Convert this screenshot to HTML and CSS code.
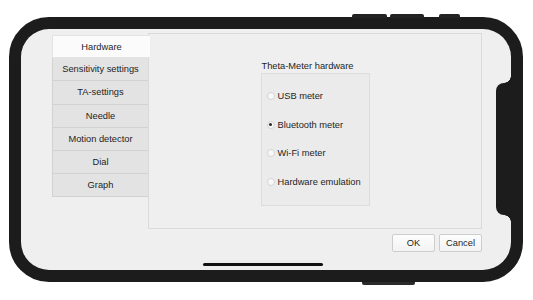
FILE: index.html
```html
<!DOCTYPE html>
<html>
<head>
<meta charset="utf-8">
<link rel="stylesheet" href="styles.css">
</head>
<body>
<div class="phone">
  <div class="btn-top b1"></div>
  <div class="btn-top b2"></div>
  <div class="btn-top b3"></div>
  <div class="btn-bottom"></div>
  <div class="screen">
    <div class="dialog">
      <div class="tabs">
        <div class="tab active">Hardware</div>
        <div class="tab">Sensitivity settings</div>
        <div class="tab">TA-settings</div>
        <div class="tab">Needle</div>
        <div class="tab">Motion detector</div>
        <div class="tab">Dial</div>
        <div class="tab">Graph</div>
      </div>
      <div class="panel">
        <div class="group">
          <div class="group-title">Theta-Meter hardware</div>
          <div class="group-box">
            <div class="radio-row"><span class="radio"></span><span>USB meter</span></div>
            <div class="radio-row"><span class="radio checked"></span><span>Bluetooth meter</span></div>
            <div class="radio-row"><span class="radio"></span><span>Wi-Fi meter</span></div>
            <div class="radio-row"><span class="radio"></span><span>Hardware emulation</span></div>
          </div>
        </div>
      </div>
    </div>
    <div class="actions">
      <button class="btn">OK</button>
      <button class="btn">Cancel</button>
    </div>
    <div class="notch"></div>
    <div class="home"></div>
  </div>
</div>
</body>
</html>
```

FILE: styles.css
```css
html, body {
  margin: 0;
  padding: 0;
  background: #ffffff;
}
body {
  width: 533px;
  height: 300px;
  overflow: hidden;
  font-family: "Liberation Sans", Arial, sans-serif;
  font-size: 9.3px;
  color: #222;
}
.phone {
  position: relative;
  margin: 17px 0 0 9px;
  width: 514px;
  height: 265px;
  box-sizing: border-box;
  border: 12px solid #1c1c1c;
  border-radius: 40px;
  background: #1c1c1c;
}
.btn-top {
  position: absolute;
  top: -15px;
  height: 4px;
  background: #232323;
  border-radius: 2px 2px 0 0;
}
.b1 { left: 331px; width: 35px; }
.b2 { left: 369px; width: 34px; }
.b3 { left: 418px; width: 21px; }
.btn-bottom {
  position: absolute;
  bottom: -15px;
  left: 341px;
  width: 53px;
  height: 3px;
  background: #2a2a2a;
  border-radius: 0 0 2px 2px;
}
.screen {
  position: relative;
  height: 100%;
  box-sizing: border-box;
  background: #efefef;
  border-radius: 28px;
  padding: 4px 29px 0 31px;
  display: flex;
  flex-direction: column;
  overflow: hidden;
}
.dialog {
  display: flex;
  height: 196px;
}
.tabs {
  width: 96px;
  margin-top: 2px;
  display: flex;
  flex-direction: column;
  position: relative;
  z-index: 1;
}
.tab {
  height: 22.2px;
  display: flex;
  align-items: center;
  justify-content: center;
  background: #e3e3e3;
  border: 1px solid #d2d2d2;
  border-top: none;
  border-right: none;
  color: #1e1e1e;
}
.tab:first-child {
  border-top: 1px solid #e6e6e6;
  height: 21.2px;
}
.tab.active {
  background: #fbfbfb;
  margin-right: -2px;
  border-color: #e4e4e4;
}
.panel {
  flex: 1;
  background: #efefef;
  border: 1px solid #dadada;
  box-sizing: border-box;
  display: flex;
  justify-content: center;
  padding-top: 27px;
}
.group {
  display: flex;
  flex-direction: column;
}
.group-title {
  height: 12px;
  line-height: 11px;
  color: #1e1e1e;
  padding-left: 1px;
}
.group-box {
  width: 109px;
  height: 133px;
  box-sizing: border-box;
  border: 1px solid #dddddd;
  background: #ebebeb;
  padding: 8px 0 0 5px;
  display: flex;
  flex-direction: column;
}
.radio-row {
  height: 28.6px;
  display: flex;
  align-items: center;
  gap: 3px;
  color: #1e1e1e;
}
.radio {
  width: 8px;
  height: 8px;
  box-sizing: border-box;
  border-radius: 50%;
  border: 1px solid #d4d4d4;
  background: #f8f8f8;
  position: relative;
}
.radio.checked::after {
  content: "";
  position: absolute;
  left: 1.5px;
  top: 1.5px;
  width: 3px;
  height: 3px;
  border-radius: 50%;
  background: #2a2a2a;
}
.actions {
  display: flex;
  justify-content: flex-end;
  gap: 4px;
  margin-top: 5px;
}
.btn {
  width: 43px;
  height: 18px;
  padding: 0;
  margin: 0;
  font: inherit;
  color: #1e1e1e;
  background: linear-gradient(#fdfdfd, #f3f3f3);
  border: 1px solid #cdcdcd;
  border-radius: 2px;
}
.notch {
  position: absolute;
  right: 0;
  top: 54px;
  width: 15px;
  height: 132px;
  background: #1c1c1c;
  border-radius: 8px 0 0 8px;
}
.notch::before,
.notch::after {
  content: "";
  position: absolute;
  right: 0;
  width: 7px;
  height: 7px;
}
.notch::before {
  top: -7px;
  background: radial-gradient(circle at 0 0, transparent 6.5px, #1c1c1c 7px);
}
.notch::after {
  bottom: -7px;
  background: radial-gradient(circle at 0 100%, transparent 6.5px, #1c1c1c 7px);
}
.home {
  position: absolute;
  left: 182px;
  bottom: 4px;
  width: 120px;
  height: 3px;
  border-radius: 2px;
  background: #111;
}
```
